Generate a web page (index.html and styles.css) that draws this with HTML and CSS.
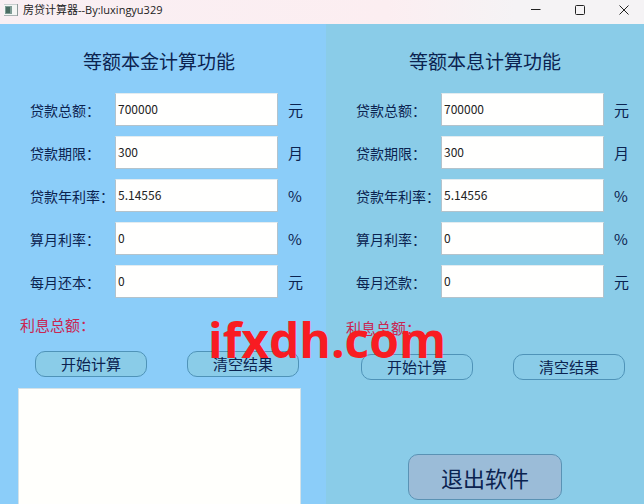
FILE: index.html
```html
<!DOCTYPE html>
<html lang="zh-CN">
  <head>
    <meta charset="UTF-8" />
    <meta name="viewport" content="width=device-width, initial-scale=1.0" />
    <title>房贷计算器--By:luxingyu329</title>
    <link rel="stylesheet" href="styles.css">
  </head>
  <body>
    <header class="titlebar">
      <svg class="app-icon" width="14" height="14" viewBox="0 0 14 14">
        <rect x="0" y="1" width="14" height="12" fill="#f4f6f4" />
        <rect x="0" y="1" width="14" height="1" fill="#c9cfcf" />
        <rect x="0" y="12" width="14" height="1" fill="#aab3b3" />
        <rect x="13" y="1" width="1" height="12" fill="#8f9a9a" />
        <rect x="1" y="3" width="7" height="8" fill="#7f9c95" />
        <rect x="2" y="4" width="4" height="6" fill="#4a6c62" />
      </svg>
      <h1 class="titlebar-text">房贷计算器--By:luxingyu329</h1>
      <div class="window-buttons">
        <button type="button" aria-label="最小化">
          <svg width="12" height="12" viewBox="0 0 12 12"><path d="M1 5.5H10.500" /></svg>
        </button>
        <button type="button" aria-label="最大化">
          <svg width="12" height="12" viewBox="0 0 12 12"><rect x="1.500" y="1.500" width="9" height="9" rx="1" /></svg>
        </button>
        <button type="button" aria-label="关闭">
          <svg width="12" height="12" viewBox="0 0 12 12"><path d="M1.500 1.500L10.500 10.500M10.500 1.500L1.500 10.500" /></svg>
        </button>
      </div>
    </header>

    <main class="panels">
      <form class="panel panel-principal">
        <h2>等额本金计算功能</h2>
        <div class="fields">
          <div class="field">
            <label for="p-total">贷款总额：</label>
            <input id="p-total" type="text" value="700000">
            <span class="unit">元</span>
          </div>
          <div class="field">
            <label for="p-term">贷款期限：</label>
            <input id="p-term" type="text" value="300">
            <span class="unit">月</span>
          </div>
          <div class="field">
            <label for="p-year">贷款年利率：</label>
            <input id="p-year" type="text" value="5.14556">
            <span class="unit">%</span>
          </div>
          <div class="field">
            <label for="p-month">算月利率：</label>
            <input id="p-month" type="text" value="0">
            <span class="unit">%</span>
          </div>
          <div class="field">
            <label for="p-pay">每月还本：</label>
            <input id="p-pay" type="text" value="0">
            <span class="unit">元</span>
          </div>
        </div>
        <p class="interest">利息总额：</p>
        <div class="actions">
          <button type="button">开始计算</button>
          <button type="button">清空结果</button>
        </div>
        <textarea class="result" aria-label="计算结果"></textarea>
      </form>

      <form class="panel panel-equal">
        <h2>等额本息计算功能</h2>
        <div class="fields">
          <div class="field">
            <label for="e-total">贷款总额：</label>
            <input id="e-total" type="text" value="700000">
            <span class="unit">元</span>
          </div>
          <div class="field">
            <label for="e-term">贷款期限：</label>
            <input id="e-term" type="text" value="300">
            <span class="unit">月</span>
          </div>
          <div class="field">
            <label for="e-year">贷款年利率：</label>
            <input id="e-year" type="text" value="5.14556">
            <span class="unit">%</span>
          </div>
          <div class="field">
            <label for="e-month">算月利率：</label>
            <input id="e-month" type="text" value="0">
            <span class="unit">%</span>
          </div>
          <div class="field">
            <label for="e-pay">每月还款：</label>
            <input id="e-pay" type="text" value="0">
            <span class="unit">元</span>
          </div>
        </div>
        <p class="interest">利息总额：</p>
        <div class="actions">
          <button type="button">开始计算</button>
          <button type="button">清空结果</button>
        </div>
        <button class="exit" type="button">退出软件</button>
      </form>
    </main>

    <div class="watermark">ifxdh.com</div>
  </body>
</html>
```
FILE: styles.css
```css
* {
  margin: 0;
  padding: 0;
  box-sizing: border-box;
}

body {
  position: relative;
  display: flex;
  flex-direction: column;
  min-height: 100vh;
  font-family: "Noto Sans CJK SC", sans-serif;
  color: #0b2350;
}

button,
input,
textarea {
  font-family: inherit;
}

.titlebar {
  display: flex;
  align-items: center;
  height: 24px;
  padding: 0 4px 4px;
  background: linear-gradient(to right, #f9eff3, #fceef1 60%, #f5f3f5 80%);
  color: #222;
}

.titlebar-text {
  margin-left: 5px;
  font-family: "Open Sans", "Noto Sans CJK SC", sans-serif;
  font-size: 11px;
  line-height: 18px;
  font-weight: normal;
}

.window-buttons {
  display: flex;
  margin-left: auto;
  margin-right: -6px;
}

.window-buttons button {
  display: flex;
  justify-content: center;
  align-items: center;
  width: 44px;
  height: 20px;
  border: none;
  background: none;
}

.window-buttons svg {
  fill: none;
  stroke: #222;
}

.panels {
  flex: 1;
  display: grid;
  grid-template-columns: minmax(326px, 1fr) minmax(318px, 1fr);
}

.panel {
  display: flex;
  flex-direction: column;
}

.panel-principal {
  background-color: #8bcdf9;
}

.panel-equal {
  background-color: #8acce8;
}

.panel h2 {
  margin: 22px 0 17px;
  padding-left: 83px;
  font-size: 19px;
  line-height: 30px;
  font-weight: normal;
}

.fields {
  display: grid;
  gap: 10px;
}

.field {
  display: flex;
  align-items: center;
  padding-left: 30px;
}

.field label {
  width: 85px;
  font-size: 14px;
  line-height: 20px;
  white-space: nowrap;
}

.field input {
  width: 163px;
  height: 33px;
  padding: 0 2px 2px;
  border: 1px solid #b3c3cc;
  border-top-color: #e3ecf0;
  background-color: #fffffe;
  color: #222;
  font-size: 12px;
}

.unit {
  margin-left: 10px;
  font-size: 15px;
  line-height: 20px;
}

.interest {
  margin: 17px 0 16px;
  padding-left: 20px;
  color: #c92652;
  font-size: 15px;
  line-height: 20px;
}

.actions {
  display: flex;
  gap: 40px;
  padding-left: 35px;
}

.actions button {
  width: 112px;
  height: 26px;
  border: 1px solid #4f93b8;
  border-radius: 10px;
  background-color: #8acce8;
  color: #0b2350;
  font-size: 15px;
  line-height: 20px;
}

.panel-equal .interest {
  margin-top: 20px;
}

.result {
  flex: 1;
  margin: 11px 25px 0 18px;
  padding: 4px;
  border: 1px solid #d5e2e8;
  border-bottom: none;
  background-color: #fffffc;
  font-size: 12px;
  resize: none;
}

.exit {
  width: 154px;
  height: 46px;
  margin: auto 0 4px 82px;
  border: 1px solid #5a92b4;
  border-radius: 10px;
  background-color: #9bbcd8;
  color: #0b2350;
  font-size: 22px;
  line-height: 30px;
}

.watermark {
  position: absolute;
  top: 308px;
  left: 208px;
  color: #f81c22;
  font-family: "Open Sans", sans-serif;
  font-size: 48px;
  line-height: 64px;
  font-weight: bold;
  pointer-events: none;
}
```
